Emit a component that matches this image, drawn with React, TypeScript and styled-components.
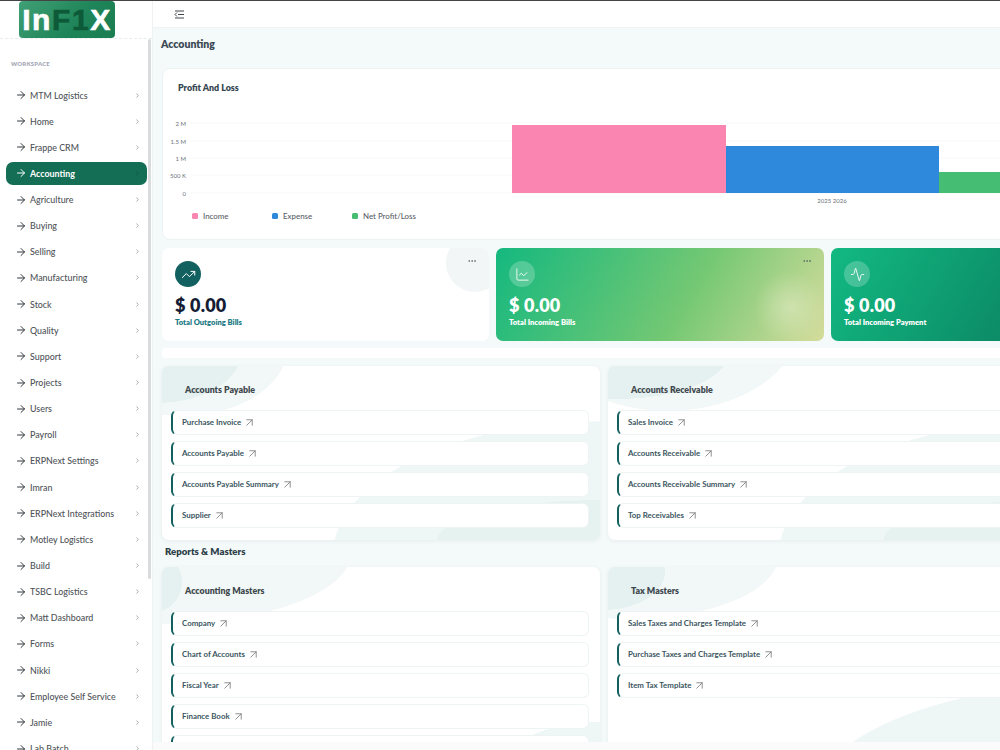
import styled, { createGlobalStyle } from "styled-components";
import {
  Activity,
  ArrowRight,
  ArrowUpRight,
  ChartLine,
  ChevronRight,
  Ellipsis,
  TrendingUp,
} from "lucide-react";

const GlobalStyle = createGlobalStyle`
  html, body {
    margin: 0;
    height: 100%;
    overflow: hidden;
    background: #ffffff;
    font-family: Lato, "Noto Sans", sans-serif;
  }
  * {
    box-sizing: border-box;
  }
`;

const Page = styled.div`
  display: grid;
  grid-template-columns: 153px 1fr;
  width: 1000px;
  height: 750px;
  overflow: hidden;
  border-top: 1px solid #444;
`;

const Sidebar = styled.aside`
  display: flex;
  flex-direction: column;
  height: 749px;
  overflow: hidden;
  border-right: 1px solid #eef2f2;
`;

const LogoRow = styled.div`
  flex: none;
  height: 38px;
  padding-left: 19px;
  border-bottom: 1px dashed #e8eeee;
`;

const Logo = styled.div`
  width: 96px;
  height: 37px;
  border-radius: 4px;
  background: linear-gradient(135deg, #41a075 0%, #1f8459 60%, #1b7d52 100%);
  font-family: "Liberation Sans", sans-serif;
  font-weight: 700;
  font-size: 30px;
  line-height: 37px;
  letter-spacing: 1.6px;
  text-align: center;
  color: #ffffff;
  -webkit-text-stroke: 0.6px currentColor;
`;

const LogoDark = styled.span`
  color: #0d5a38;
`;

const SideBody = styled.div`
  position: relative;
  flex: 1;
  padding: 21px 6px 0;
  overflow: hidden;

  &::after {
    content: "";
    position: absolute;
    top: 0;
    right: 1px;
    width: 3px;
    height: 540px;
    background: #d9dcdd;
    border-radius: 2px;
  }
`;

const SideHeading = styled.div`
  padding-left: 5px;
  height: 8px;
  margin-bottom: 15.5px;
  font-size: 5.9px;
  font-weight: 800;
  letter-spacing: 0.2px;
  color: #a9abb8;
  line-height: 8px;
`;

const NavList = styled.div`
  display: flex;
  flex-direction: column;
  gap: 3.15px;
  width: 141px;
`;

const NavItem = styled.div<{ $active?: boolean }>`
  display: flex;
  align-items: center;
  height: 23px;
  padding: 0 6px 0 9px;
  border-radius: 7px;
  background: ${(p) => (p.$active ? "#146d55" : "transparent")};
  color: ${(p) => (p.$active ? "#ffffff" : "#4f5459")};
  font-size: 8.9px;
  font-weight: ${(p) => (p.$active ? 700 : 500)};
  white-space: nowrap;

  & > span {
    flex: 1;
    margin-left: 3px;
  }

  & > svg:first-child {
    color: ${(p) => (p.$active ? "#ffffff" : "#33383c")};
  }

  & > svg:last-child {
    color: ${(p) => (p.$active ? "#0d4c39" : "#70757a")};
  }
`;

const Main = styled.main`
  display: flex;
  flex-direction: column;
  position: relative;
  height: 749px;
  overflow: hidden;
  background: #f4f9f9;
`;

const TopBar = styled.header`
  flex: none;
  display: flex;
  align-items: center;
  height: 27px;
  padding-left: 21px;
  background: #ffffff;
  border-bottom: 1px solid #eef3f3;
`;

const PageHead = styled.div`
  flex: none;
  height: 32px;
  padding-left: 8px;
  display: flex;
  align-items: center;
  font-size: 10.5px;
  font-weight: 800;
  color: #3c4a55;
`;

const Content = styled.div`
  display: flex;
  flex-direction: column;
  width: 996px;
  margin: 8px 0 0 9px;
`;

const ChartCard = styled.section`
  height: 172px;
  padding: 13px 15px;
  background: #ffffff;
  border: 1px solid #edf3f3;
  border-radius: 8px;
`;

const ChartTitle = styled.h3`
  margin: 0;
  height: 12px;
  font-size: 8.9px;
  line-height: 12px;
  font-weight: 800;
  color: #34474f;
`;

const ChartSvg = styled.svg`
  display: block;
  margin: 6px 0 0 -15px;
`;

const Legend = styled.div`
  display: flex;
  margin: -1px 0 0 14px;
`;

const LegendItem = styled.div`
  display: flex;
  align-items: center;
  gap: 5px;
  width: 80px;
  font-size: 7.9px;
  font-weight: 500;
  color: #5a6068;
  white-space: nowrap;
`;

const LegendDot = styled.i<{ $color: string }>`
  width: 6px;
  height: 6px;
  border-radius: 1.5px;
  background: ${(p) => p.$color};
`;

const StatRow = styled.div`
  display: grid;
  grid-template-columns: 327px 328px 328px;
  gap: 7px;
  margin-top: 8px;
`;

const StatCard = styled.div<{ $tone: "plain" | "lime" | "teal" }>`
  position: relative;
  height: 93px;
  padding: 13px 13px 0;
  border-radius: 7px;
  overflow: hidden;
  color: ${(p) => (p.$tone === "plain" ? "#141d33" : "#ffffff")};
  background: ${(p) =>
    p.$tone === "plain"
      ? "#ffffff"
      : p.$tone === "lime"
        ? "radial-gradient(circle at 294px 59px, rgba(226,236,200,0.55) 0, rgba(226,236,200,0) 36px), linear-gradient(120deg, #14b87f 0%, #74c873 58%, #d5dc9c 100%)"
        : "linear-gradient(120deg, #12b981 0%, #0c8a66 60%, #087a5e 100%)"};
`;

const StatCircle = styled.div`
  position: absolute;
  top: -14px;
  right: -15px;
  width: 58px;
  height: 58px;
  border-radius: 50%;
  background: #f2f6f7;
`;

const More = styled.div`
  position: absolute;
  top: 8px;
  right: 12px;
  display: flex;
  color: #4a5560;
`;

const StatIcon = styled.div<{ $filled?: boolean }>`
  display: flex;
  align-items: center;
  justify-content: center;
  width: 26px;
  height: 26px;
  border-radius: 50%;
  color: #ffffff;
  background: ${(p) => (p.$filled ? "#12605f" : "rgba(255,255,255,0.22)")};
`;

const StatValue = styled.div`
  margin-top: 7px;
  font-size: 18px;
  line-height: 22px;
  font-weight: 800;
  letter-spacing: 0.2px;
`;

const StatLabel = styled.div<{ $plain?: boolean }>`
  margin-top: 1px;
  font-size: 7.6px;
  line-height: 10px;
  font-weight: 800;
  color: ${(p) => (p.$plain ? "#1c7a85" : "#ffffff")};
`;

const Divider = styled.div`
  flex: none;
  height: 10px;
  margin: 7px 0 8px;
  background: #ffffff;
  border-radius: 3px;
`;

const LinkGrid = styled.div`
  display: grid;
  grid-template-columns: 438px 438px;
  gap: 8px;
`;

type BlobKind = "payable" | "receivable" | "masters" | "tax";

const blob = (x: number, y: number, rx: number, ry: number, color: string) =>
  `radial-gradient(ellipse ${rx}px ${ry}px at ${x}px ${y}px, ${color} 99.5%, transparent 100%)`;

const dark = "#e4f1f0";
const light = "#f1f8f7";

const cardBlobs: Record<BlobKind, string> = {
  payable: [
    blob(-5, -15, 85, 52, dark),
    blob(20, -20, 106, 70, light),
    blob(440, 174, 165, 40, "#e6f2f0"),
    blob(440, 190, 270, 135, "#eff7f6"),
  ].join(", "),
  receivable: [
    blob(10, -15, 112, 48, dark),
    blob(60, -40, 130, 85, light),
    blob(440, 174, 165, 40, "#e6f2f0"),
    blob(440, 190, 270, 135, "#eff7f6"),
  ].join(", "),
  masters: [
    blob(-8, 15, 28, 30, dark),
    blob(0, -15, 190, 72, light),
    blob(440, 200, 100, 45, "#eff7f6"),
  ].join(", "),
  tax: [
    blob(-5, 5, 62, 38, dark),
    blob(20, -10, 150, 62, light),
    blob(500, 240, 300, 125, "#eff7f6"),
  ].join(", "),
};

const LinkCard = styled.section<{ $height: number; $blobs: BlobKind }>`
  height: ${(p) => p.$height}px;
  padding: 0 11px 0 9px;
  overflow: hidden;
  background-color: #ffffff;
  background-image: ${(p) => cardBlobs[p.$blobs]};
  border-radius: 7px;
  box-shadow: 0 1px 4px rgba(60, 90, 90, 0.07);
`;

const CardTitle = styled.h4`
  margin: 0;
  height: 44px;
  padding: 18px 0 0 14px;
  font-size: 8.8px;
  line-height: 12px;
  font-weight: 800;
  color: #3f484e;
`;

const LinkList = styled.div`
  display: flex;
  flex-direction: column;
  gap: 6px;
`;

const LinkRow = styled.a`
  display: flex;
  align-items: center;
  gap: 2px;
  height: 25px;
  padding: 0 0 1px 9px;
  background: #ffffff;
  border: 1px solid #eef3f3;
  border-left: 2px solid #12605f;
  border-radius: 6px;
  font-size: 7.9px;
  font-weight: 700;
  color: #3a5560;
  white-space: nowrap;
`;

const SectionTitle = styled.h3`
  margin: 0;
  padding: 6px 0 0 3px;
  height: 27px;
  font-size: 9.6px;
  line-height: 12px;
  font-weight: 800;
  color: #2e4048;
`;

const FooterBar = styled.div`
  position: absolute;
  left: 0;
  right: 0;
  bottom: 0;
  height: 8px;
  background: #fbfbfb;
`;

const navItems = [
  "MTM Logistics",
  "Home",
  "Frappe CRM",
  "Accounting",
  "Agriculture",
  "Buying",
  "Selling",
  "Manufacturing",
  "Stock",
  "Quality",
  "Support",
  "Projects",
  "Users",
  "Payroll",
  "ERPNext Settings",
  "Imran",
  "ERPNext Integrations",
  "Motley Logistics",
  "Build",
  "TSBC Logistics",
  "Matt Dashboard",
  "Forms",
  "Nikki",
  "Employee Self Service",
  "Jamie",
  "Lab Batch",
];

const gridYs = [123, 141, 158, 175, 193];
const yLabels = ["2 M", "1.5 M", "1 M", "500 K", "0"];
const bars = [
  { x: 512, y: 125, w: 214, color: "#f985b0" },
  { x: 726, y: 146, w: 213, color: "#2e89dc" },
  { x: 939, y: 172, w: 214, color: "#45bd73" },
];

function ProfitChart() {
  // coordinates are page pixels shifted into the card
  const ox = 163;
  const oy = 100;
  return (
    <ChartSvg width="994" height="112" viewBox="0 0 994 112">
      {gridYs.map((y, i) => (
        <g key={y}>
          <line x1={190 - ox} x2={994} y1={y - oy} y2={y - oy} stroke="#f6f8f8" />
          <text
            x={186 - ox}
            y={y - oy + 2.5}
            textAnchor="end"
            fontSize="6"
            fill="#6b7178"
            fontFamily="Lato, sans-serif"
          >
            {yLabels[i]}
          </text>
        </g>
      ))}
      {bars.map((b) => (
        <rect key={b.x} x={b.x - ox} y={b.y - oy} width={b.w} height={193 - b.y} fill={b.color} />
      ))}
      <text
        x={832 - ox}
        y={203 - oy}
        textAnchor="middle"
        fontSize="6"
        fill="#6b7178"
        fontFamily="Lato, sans-serif"
      >
        2025 2026
      </text>
    </ChartSvg>
  );
}

function CollapseIcon() {
  return (
    <svg width="11" height="11" viewBox="0 0 11 11" fill="none" stroke="#3f484e" strokeWidth="1">
      <path d="M1 2h9M4 5.500h6M1 9h9" />
      <path d="M3 3.500 1 5.500l2 2" />
    </svg>
  );
}

function LinkGroup({
  title,
  links,
  height,
  blobs,
  extraRow,
}: {
  title: string;
  links: string[];
  height: number;
  blobs: BlobKind;
  extraRow?: boolean;
}) {
  return (
    <LinkCard $height={height} $blobs={blobs}>
      <CardTitle>{title}</CardTitle>
      <LinkList>
        {links.map((l) => (
          <LinkRow key={l}>
            {l}
            <ArrowUpRight size={13} color="#777" strokeWidth={1.5} />
          </LinkRow>
        ))}
        {/* the next row is only peeking out above the footer */}
        {extraRow && <LinkRow />}
      </LinkList>
    </LinkCard>
  );
}

export default function App() {
  return (
    <Page>
      <GlobalStyle />
      <Sidebar>
        <LogoRow>
          <Logo>
            In<LogoDark>F1</LogoDark>X
          </Logo>
        </LogoRow>
        <SideBody>
          <SideHeading>WORKSPACE</SideHeading>
          <NavList>
            {navItems.map((n) => (
              <NavItem key={n} $active={n === "Accounting"}>
                <ArrowRight size={12} strokeWidth={2} />
                <span>{n}</span>
                <ChevronRight size={7} strokeWidth={2} />
              </NavItem>
            ))}
          </NavList>
        </SideBody>
      </Sidebar>
      <Main>
        <TopBar>
          <CollapseIcon />
        </TopBar>
        <PageHead>Accounting</PageHead>
        <Content>
          <ChartCard>
            <ChartTitle>Profit And Loss</ChartTitle>
            <ProfitChart />
            <Legend>
              <LegendItem>
                <LegendDot $color="#f985b0" />
                Income
              </LegendItem>
              <LegendItem>
                <LegendDot $color="#2e89dc" />
                Expense
              </LegendItem>
              <LegendItem>
                <LegendDot $color="#45bd73" />
                Net Profit/Loss
              </LegendItem>
            </Legend>
          </ChartCard>
          <StatRow>
            <StatCard $tone="plain">
              <StatCircle />
              <More>
                <Ellipsis size={10} strokeWidth={1.5} />
              </More>
              <StatIcon $filled>
                <TrendingUp size={15} strokeWidth={1.6} />
              </StatIcon>
              <StatValue>$ 0.00</StatValue>
              <StatLabel $plain>Total Outgoing Bills</StatLabel>
            </StatCard>
            <StatCard $tone="lime">
              <More>
                <Ellipsis size={10} strokeWidth={1.5} />
              </More>
              <StatIcon>
                <ChartLine size={15} strokeWidth={1.4} />
              </StatIcon>
              <StatValue>$ 0.00</StatValue>
              <StatLabel>Total Incoming Bills</StatLabel>
            </StatCard>
            <StatCard $tone="teal">
              <StatIcon>
                <Activity size={15} strokeWidth={1.4} />
              </StatIcon>
              <StatValue>$ 0.00</StatValue>
              <StatLabel>Total Incoming Payment</StatLabel>
            </StatCard>
          </StatRow>
          <Divider />
          <LinkGrid>
            <LinkGroup
              title="Accounts Payable"
              height={174}
              blobs="payable"
              links={["Purchase Invoice", "Accounts Payable", "Accounts Payable Summary", "Supplier"]}
            />
            <LinkGroup
              title="Accounts Receivable"
              height={174}
              blobs="receivable"
              links={["Sales Invoice", "Accounts Receivable", "Accounts Receivable Summary", "Top Receivables"]}
            />
          </LinkGrid>
          <SectionTitle>Reports &amp; Masters</SectionTitle>
          <LinkGrid>
            <LinkGroup
              title="Accounting Masters"
              height={260}
              blobs="masters"
              links={["Company", "Chart of Accounts", "Fiscal Year", "Finance Book"]}
              extraRow
            />
            <LinkGroup
              title="Tax Masters"
              height={260}
              blobs="tax"
              links={["Sales Taxes and Charges Template", "Purchase Taxes and Charges Template", "Item Tax Template"]}
            />
          </LinkGrid>
        </Content>
        <FooterBar />
      </Main>
    </Page>
  );
}
